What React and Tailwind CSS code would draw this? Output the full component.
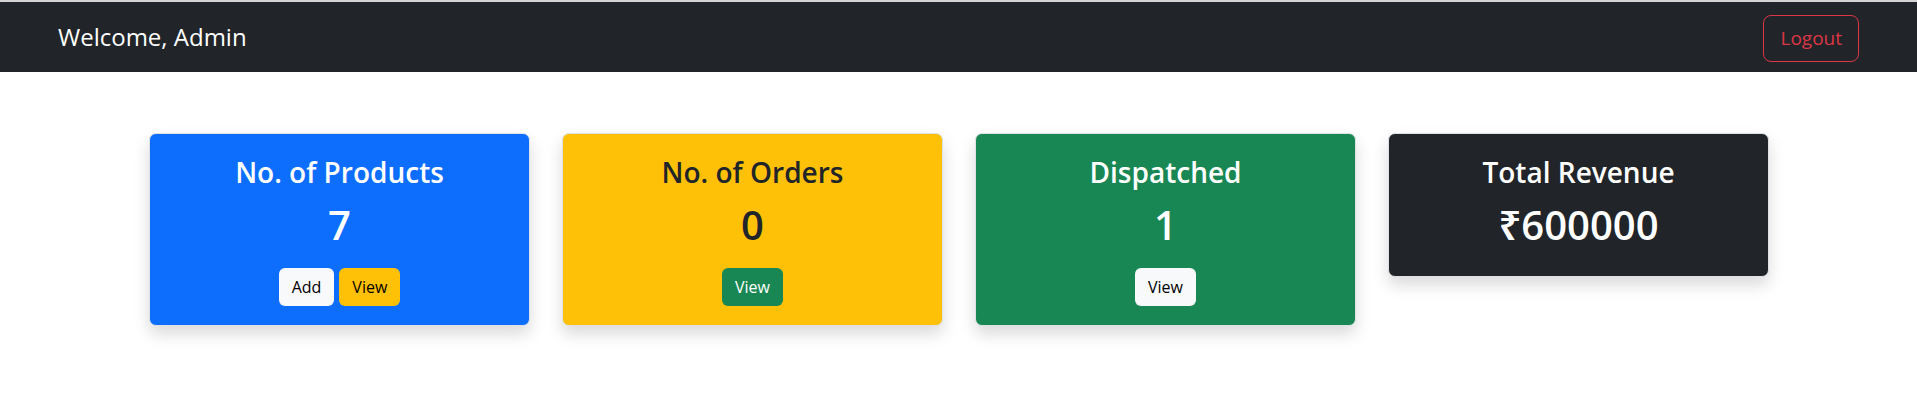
const font = { fontFamily: '"Open Sans", "Noto Sans", sans-serif' };

const cards = [
  {
    title: "No. of Products",
    value: "7",
    bg: "bg-[#0d6efd]",
    text: "text-white",
    buttons: [
      { label: "Add", cls: "bg-[#f8f9fa] text-black" },
      { label: "View", cls: "bg-[#ffc107] text-black" },
    ],
  },
  {
    title: "No. of Orders",
    value: "0",
    bg: "bg-[#ffc107]",
    text: "text-[#212529]",
    buttons: [{ label: "View", cls: "bg-[#198754] text-white" }],
  },
  {
    title: "Dispatched",
    value: "1",
    bg: "bg-[#198754]",
    text: "text-white",
    buttons: [{ label: "View", cls: "bg-[#f8f9fa] text-black" }],
  },
  {
    title: "Total Revenue",
    value: "₹600000",
    bg: "bg-[#212529]",
    text: "text-white",
    buttons: [],
  },
];

function StatCard({ card }) {
  return (
    <div
      className={`w-[381px] self-start rounded-[7px] border border-[#dee2e6] shadow-[0_8px_16px_rgba(0,0,0,0.15)] ${card.bg} ${card.text}`}
    >
      <div className="flex flex-col items-center pt-[21px] pb-[19px] px-4 text-center">
        <h3 className="text-[28px] leading-[34px] font-semibold mb-[12px]">{card.title}</h3>
        <h1 className="text-[40px] leading-[48px] font-semibold mb-[8px]">{card.value}</h1>
        {card.buttons.length > 0 && (
          <div className="flex gap-[5px] mt-[11px]">
            {card.buttons.map((b) => (
              <button
                key={b.label}
                className={`px-3 py-1.5 text-base leading-6 rounded-[6px] border border-transparent ${b.cls}`}
              >
                {b.label}
              </button>
            ))}
          </div>
        )}
      </div>
    </div>
  );
}

export default function App() {
  return (
    <div className="min-h-[412px] bg-white" style={font}>
      <div className="h-[2px] bg-[#d4d4d4]" />
      <nav className="h-[70px] bg-[#212529] flex items-center justify-between px-[58px]">
        <span className="text-white text-[24px] leading-[30px]">Welcome, Admin</span>
        <button className="px-4 py-2 mt-[2px] text-[19px] leading-[29px] rounded-lg border border-[#dc3545] text-[#dc3545]">
          Logout
        </button>
      </nav>
      <main className="pt-[61px] pl-[1px] flex justify-center gap-[32px]">
        {cards.map((c) => (
          <StatCard key={c.title} card={c} />
        ))}
      </main>
    </div>
  );
}
